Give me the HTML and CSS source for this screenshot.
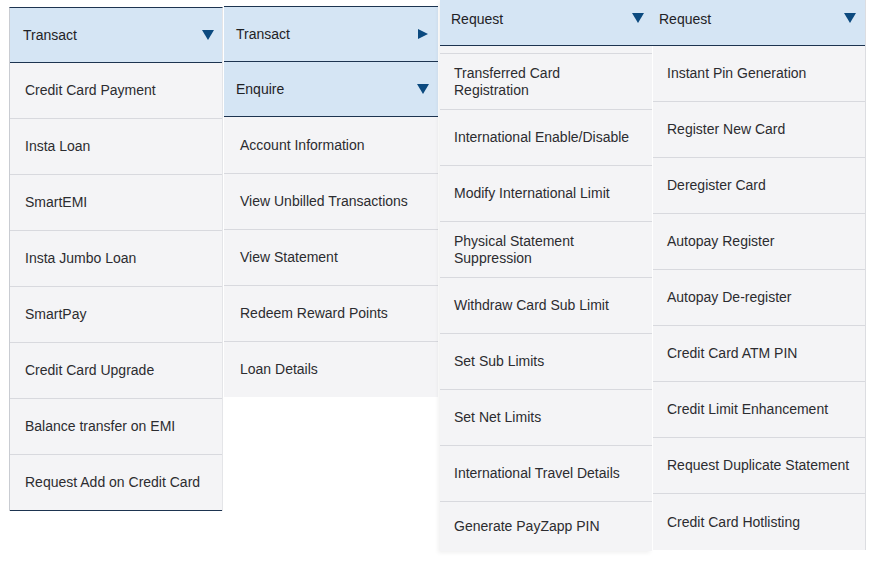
FILE: index.html
```html
<!DOCTYPE html>
<html>
<head>
<meta charset="utf-8">
<link rel="stylesheet" href="styles.css">
</head>
<body>
<div class="board">
  <div class="menu col1">
    <div class="head"><span>Transact</span><span class="tri down"></span></div>
    <ul class="items">
      <li>Credit Card Payment</li>
      <li>Insta Loan</li>
      <li>SmartEMI</li>
      <li>Insta Jumbo Loan</li>
      <li>SmartPay</li>
      <li>Credit Card Upgrade</li>
      <li>Balance transfer on EMI</li>
      <li class="last">Request Add on Credit Card</li>
    </ul>
  </div>
  <div class="menu col2">
    <div class="head"><span>Transact</span><span class="tri right"></span></div>
    <div class="head"><span>Enquire</span><span class="tri down"></span></div>
    <ul class="items">
      <li>Account Information</li>
      <li>View Unbilled Transactions</li>
      <li>View Statement</li>
      <li>Redeem Reward Points</li>
      <li class="plain">Loan Details</li>
    </ul>
  </div>
  <div class="menu col3">
    <div class="head short"><span>Request</span><span class="tri down"></span></div>
    <ul class="items gap">
      <li class="two">Transferred Card<br>Registration</li>
      <li>International Enable/Disable</li>
      <li>Modify International Limit</li>
      <li class="two">Physical Statement<br>Suppression</li>
      <li>Withdraw Card Sub Limit</li>
      <li>Set Sub Limits</li>
      <li>Set Net Limits</li>
      <li>International Travel Details</li>
      <li class="plain">Generate PayZapp PIN</li>
    </ul>
  </div>
  <div class="menu col4">
    <div class="head short"><span>Request</span><span class="tri down"></span></div>
    <ul class="items">
      <li>Instant Pin Generation</li>
      <li>Register New Card</li>
      <li>Deregister Card</li>
      <li>Autopay Register</li>
      <li>Autopay De-register</li>
      <li>Credit Card ATM PIN</li>
      <li>Credit Limit Enhancement</li>
      <li>Request Duplicate Statement</li>
      <li class="plain">Credit Card Hotlisting</li>
    </ul>
  </div>
</div>
</body>
</html>
```
FILE: styles.css
```css
html, body {
  margin: 0;
  padding: 0;
  background: #ffffff;
}
body {
  font-family: "Liberation Sans", Arial, Helvetica, sans-serif;
  font-size: 14px;
  color: #2c2c30;
}
.board {
  display: flex;
  align-items: flex-start;
  width: 882px;
  height: 561px;
}
.menu {
  display: flex;
  flex-direction: column;
  background: #f4f4f6;
}
.col1 {
  margin-left: 9px;
  margin-top: 7px;
  width: 214px;
  border-top: 1px solid #1d3450;
  border-left: 1px solid #c9ccd2;
  border-right: 1px solid #e4e5e8;
  box-sizing: border-box;
}
.col2 {
  margin-left: 1px;
  margin-top: 6px;
  width: 214px;
  border-top: 1px solid #1d3450;
  box-sizing: border-box;
}
.col3 {
  margin-left: 2px;
  width: 212px;
  box-shadow: -2px 2px 4px rgba(0,0,0,0.06);
}
.col4 {
  margin-left: 1px;
  width: 213px;
  border-right: 1px solid #dcdde1;
  box-sizing: border-box;
}
.head {
  display: flex;
  align-items: center;
  justify-content: space-between;
  height: 54px;
  padding: 0 8px 0 13px;
  background: #d5e5f4;
  border-bottom: 1px solid #1d3450;
  color: #1f2226;
}
.col2 .head {
  padding-left: 12px;
  padding-right: 9px;
}
.head.short {
  height: 46px;
  align-items: flex-start;
  padding-top: 11px;
  box-sizing: border-box;
  padding-left: 11px;
  padding-right: 8px;
}
.col4 .head.short {
  padding-left: 7px;
  padding-right: 9px;
  margin-left: -1px;
}
.tri {
  display: block;
  width: 0;
  height: 0;
}
.tri.down {
  border-left: 6px solid transparent;
  border-right: 6px solid transparent;
  border-top: 10px solid #0c4a7f;
}
.head.short .tri.down {
  margin-top: 2px;
}
.tri.right {
  border-top: 5.5px solid transparent;
  border-bottom: 5.5px solid transparent;
  border-left: 10px solid #0c4a7f;
  margin-right: 1px;
}
.items {
  list-style: none;
  margin: 0;
  padding: 0;
}
.items.gap {
  padding-top: 7px;
}
.items.gap li:first-child {
  border-top: 1px solid #d8d9de;
}
.items li {
  display: flex;
  align-items: center;
  height: 55px;
  padding: 0 14px;
  border-bottom: 1px solid #d8d9de;
  line-height: 17px;
}
.col1 .items li {
  padding-left: 15px;
}
.col2 .items li {
  padding-left: 16px;
  padding-top: 1px;
  box-sizing: content-box;
  height: 55px;
}
.col2 .items li + li {
  padding-top: 0;
}
.items li.last {
  border-bottom: 1px solid #1d3450;
}
.items li.plain {
  border-bottom: 0;
}
.col3 .items li.plain {
  height: 49px;
}
.col4 .items li.plain {
  height: 56px;
}
```
